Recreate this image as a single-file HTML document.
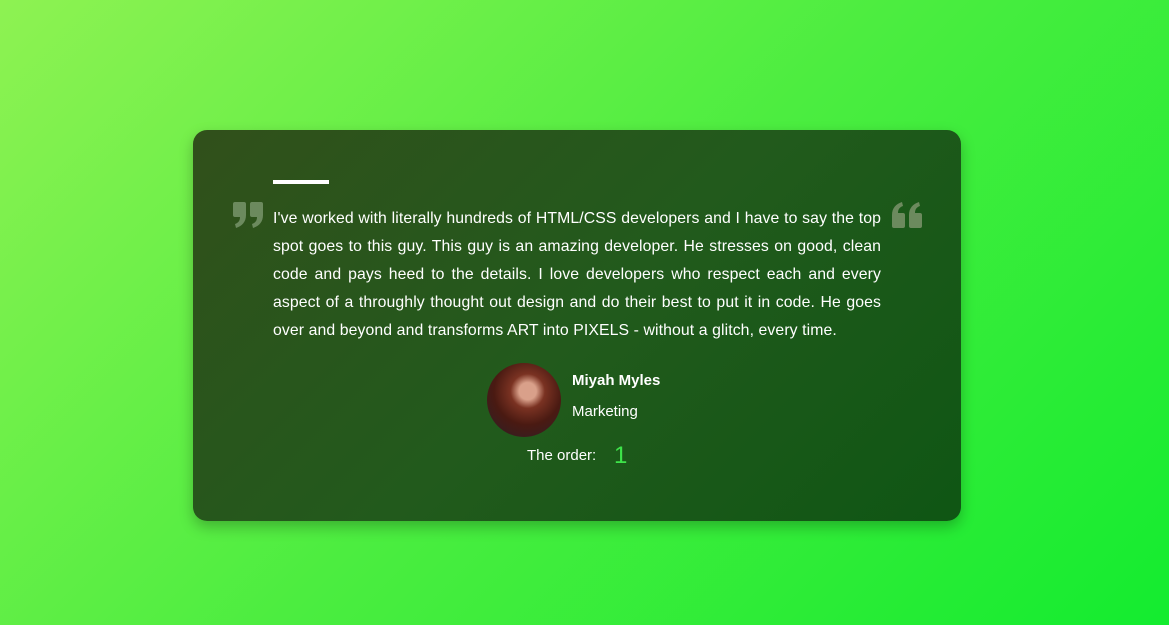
<!DOCTYPE html>
<html><head><style>
html,body{margin:0;width:1169px;height:625px;overflow:hidden}
body{background:linear-gradient(135deg,#8ef252 0%,#4ced40 50%,#13ec2f 100%);font-family:"Liberation Sans",sans-serif;position:relative}
.card{position:absolute;left:193px;top:130px;width:768px;height:391px;border-radius:14px;background:linear-gradient(135deg,#31501b 0%,#225a1c 50%,#0f5614 100%);box-shadow:0 6px 14px rgba(0,0,0,.25)}
.bar{position:absolute;left:80px;top:50px;width:56px;height:4px;background:#fff}
.txt{position:absolute;left:80px;top:75px;width:608px;color:#fff;font-size:15.8px;line-height:28px;text-align:justify;letter-spacing:0.1px}
.q{position:absolute;top:72px}
.av{position:absolute;left:294px;top:233px;width:74px;height:74px;border-radius:50%;background:radial-gradient(circle at 55% 38%,#d9a08a 0 14%,#7a3222 28%,#4a1a12 55%,#2a1f2a 100%)}
.name{position:absolute;left:379px;top:242px;color:#fff;font-weight:bold;font-size:15px}
.role{position:absolute;left:379px;top:273px;color:#fff;font-size:15px}
.ord{position:absolute;left:334px;top:317px;color:#fff;font-size:15px}
.num{position:absolute;left:421px;top:312px;color:#3ee44a;font-size:24px}
</style></head><body>
<div class="card">
<div class="bar"></div>
<svg class="q" style="left:40px" width="31" height="26" viewBox="0 0 31 26"><g fill="#6c8a5e"><path id="g" d="M2 0h9a2 2 0 0 1 2 2v11c0 7-4 11-10 13l-1-4c3-1 5-3 5-7H2a2 2 0 0 1-2-2V2a2 2 0 0 1 2-2z"/><path transform="translate(17 0)" d="M2 0h9a2 2 0 0 1 2 2v11c0 7-4 11-10 13l-1-4c3-1 5-3 5-7H2a2 2 0 0 1-2-2V2a2 2 0 0 1 2-2z"/></g></svg>
<svg class="q" style="left:698px" width="31" height="26" viewBox="0 0 31 26"><g fill="#6c8a5e" transform="rotate(180 15.5 13)"><path d="M2 0h9a2 2 0 0 1 2 2v11c0 7-4 11-10 13l-1-4c3-1 5-3 5-7H2a2 2 0 0 1-2-2V2a2 2 0 0 1 2-2z"/><path transform="translate(17 0)" d="M2 0h9a2 2 0 0 1 2 2v11c0 7-4 11-10 13l-1-4c3-1 5-3 5-7H2a2 2 0 0 1-2-2V2a2 2 0 0 1 2-2z"/></g></svg>
<div class="txt">I've worked with literally hundreds of HTML/CSS developers and I have to say the top spot goes to this guy. This guy is an amazing developer. He stresses on good, clean code and pays heed to the details. I love developers who respect each and every aspect of a throughly thought out design and do their best to put it in code. He goes over and beyond and transforms ART into PIXELS - without a glitch, every time.</div>
<div class="av"></div>
<div class="name">Miyah Myles</div>
<div class="role">Marketing</div>
<div class="ord">The order:</div>
<div class="num">1</div>
</div>
</body></html>
